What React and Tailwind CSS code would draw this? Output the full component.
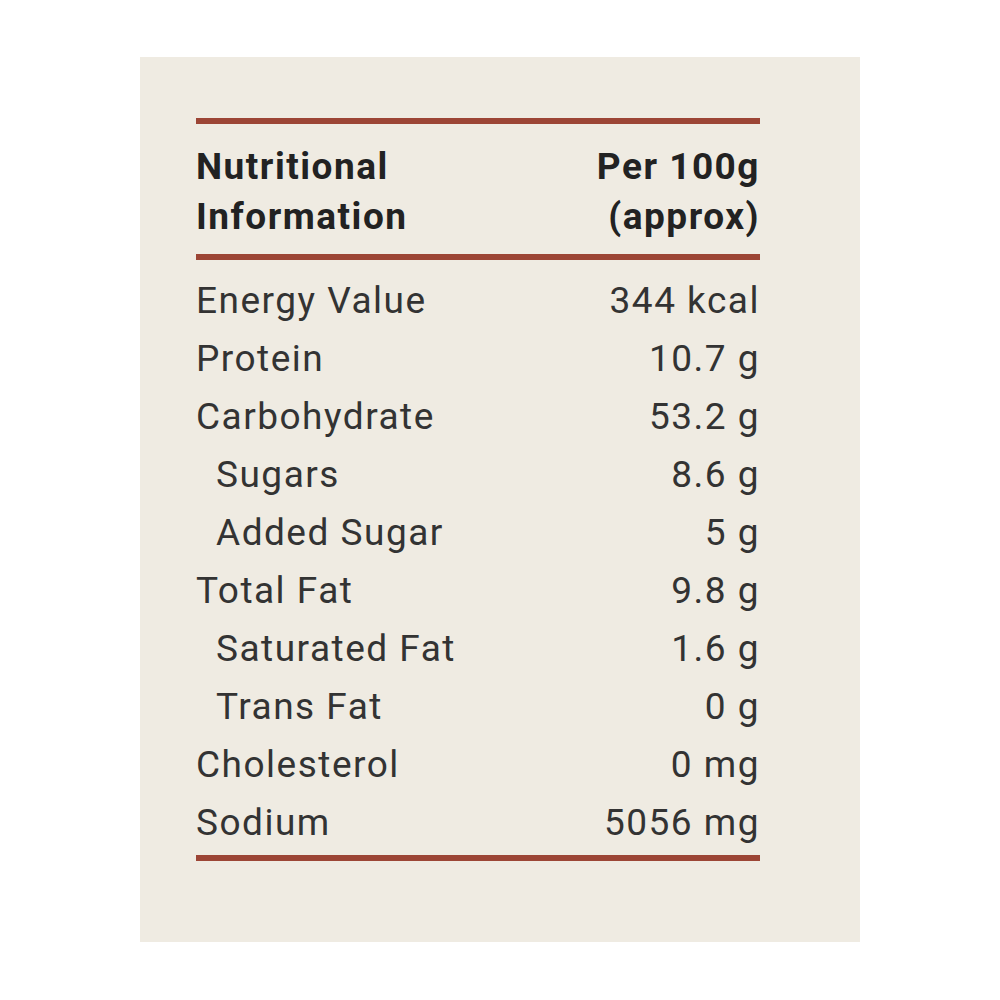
const rows = [
  { label: "Energy Value", value: "344 kcal" },
  { label: "Protein", value: "10.7 g" },
  { label: "Carbohydrate", value: "53.2 g" },
  { label: "Sugars", value: "8.6 g", sub: true },
  { label: "Added Sugar", value: "5 g", sub: true },
  { label: "Total Fat", value: "9.8 g" },
  { label: "Saturated Fat", value: "1.6 g", sub: true },
  { label: "Trans Fat", value: "0 g", sub: true },
  { label: "Cholesterol", value: "0 mg" },
  { label: "Sodium", value: "5056 mg" },
];

export default function App() {
  return (
    <div className="min-h-screen bg-white pt-[57px] pl-[140px]">
      <div className="w-[720px] h-[885px] bg-[#efebe2] pt-[61px] pl-[56px] pr-[100px] font-['Roboto',sans-serif] text-[#333]">
        <div className="h-[6px] bg-[#9c4535]" />
        <div className="flex justify-between pt-[18px] pb-[12px] text-[37px] leading-[50px] font-bold tracking-[1.5px] text-[#222]">
          <div>
            <div>Nutritional</div>
            <div>Information</div>
          </div>
          <div className="text-right">
            <div>Per 100g</div>
            <div>(approx)</div>
          </div>
        </div>
        <div className="h-[6px] bg-[#9c4535]" />
        <div className="pt-[12px] pb-[3px]">
          {rows.map((r) => (
            <div key={r.label} className="flex justify-between text-[37px] leading-[58px] tracking-[1.5px]">
              <span className={r.sub ? "pl-[20px]" : ""}>{r.label}</span>
              <span>{r.value}</span>
            </div>
          ))}
        </div>
        <div className="h-[6px] bg-[#9c4535]" />
      </div>
    </div>
  );
}
